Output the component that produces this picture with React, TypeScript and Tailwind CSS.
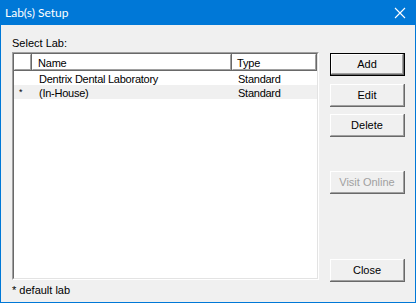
import React from 'react';

const font = { fontFamily: '"Liberation Sans", Arial, sans-serif' };

interface Lab {
  name: string;
  type: string;
  isDefault: boolean;
}

const labs: Lab[] = [
  { name: 'Dentrix Dental Laboratory', type: 'Standard', isDefault: false },
  { name: '(In-House)', type: 'Standard', isDefault: true },
];

const WinButton: React.FC<{ label: string; isDefault?: boolean; disabled?: boolean; className?: string }> = ({
  label,
  isDefault,
  disabled,
  className = '',
}) => (
  <div className={`h-[23px] w-[75px] ${isDefault ? 'border border-black' : ''} ${className}`}>
    <div className="h-full w-full border-b border-r border-[#696969] bg-[#f0f0f0]">
      <div className="flex h-full w-full items-center justify-center border-l border-t border-b border-r border-l-white border-t-white border-b-[#a0a0a0] border-r-[#a0a0a0] pt-[1px] text-[11px] leading-none">
        <span className={disabled ? 'text-[#a0a0a0]' : 'text-black'}>{label}</span>
      </div>
    </div>
  </div>
);

const HeaderCell: React.FC<{ w: string; label?: string; pl: string }> = ({ w, label, pl }) => (
  <div className={`${w} h-full border-b border-r border-[#696969]`}>
    <div
      className={`flex h-full items-center border-l border-t border-b border-r border-l-white border-t-white border-b-[#a0a0a0] border-r-[#a0a0a0] ${pl} pt-[2px] text-[11px] leading-none tracking-[-0.2px]`}
    >
      {label}
    </div>
  </div>
);

export default function App() {
  return (
    <div className="flex h-[303px] w-[416px] flex-col bg-[#0078d7] px-[1px] pb-[1px]" style={font}>
      {/* Title bar */}
      <div className="flex h-[25px] shrink-0 items-center justify-between text-white">
        <span className="pl-[4px] pt-[1px] text-[12px]" style={{ fontFamily: 'Lato, "Liberation Sans", sans-serif' }}>
          Lab(s) Setup
        </span>
        <svg width="46" height="25" viewBox="0 0 46 25" className="shrink-0">
          <path d="M26 8 L36 18 M36 8 L26 18" stroke="white" strokeWidth="1.1" />
        </svg>
      </div>

      {/* Body */}
      <div className="flex flex-1 bg-[#f0f0f0] pl-[11px] text-black">
        <div className="flex w-[307px] flex-col">
          <div className="h-[27px] pt-[12px] text-[11px] leading-[13px]">Select Lab:</div>
          <div className="h-[228px] border-l border-t border-r border-b border-l-[#a0a0a0] border-t-[#a0a0a0] border-r-white border-b-white">
            <div className="flex h-full flex-col border-l border-t border-r border-b border-l-[#696969] border-t-[#696969] border-r-[#e3e3e3] border-b-[#e3e3e3] bg-white">
              <div className="flex h-[17px] shrink-0">
                <HeaderCell w="w-[18px]" pl="pl-[5px]" />
                <HeaderCell w="w-[200px]" pl="pl-[5px]" label="Name" />
                <HeaderCell w="w-[85px]" pl="pl-[4px]" label="Type" />
              </div>
              {labs.map((lab, i) => (
                <div
                  key={i}
                  className={`flex h-[14px] items-center pt-[2px] text-[11px] leading-none tracking-[-0.25px] ${
                    i === 1 ? 'bg-[#f0f0f0]' : ''
                  }`}
                >
                  <div className="w-[18px] self-start pl-[5px] pt-[1px] text-[9px]">{lab.isDefault ? '*' : ''}</div>
                  <div className="w-[200px] pl-[7px]">{lab.name}</div>
                  <div className="w-[85px] pl-[6px]">{lab.type}</div>
                </div>
              ))}
            </div>
          </div>
          <div className="pt-[4px] text-[11px] leading-[13px]">* default lab</div>
        </div>

        <div className="ml-[11px] flex flex-col pt-[28px]">
          <WinButton label="Add" isDefault />
          <WinButton label="Edit" className="mt-[8px]" />
          <WinButton label="Delete" className="mt-[7px]" />
          <WinButton label="Visit Online" disabled className="mt-[34px]" />
          <WinButton label="Close" className="mt-[65px]" />
        </div>
      </div>
    </div>
  );
}
